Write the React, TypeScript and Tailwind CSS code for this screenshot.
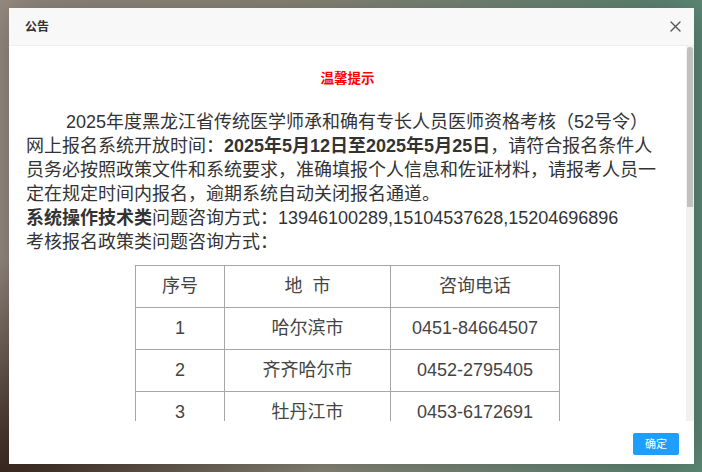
import React from 'react';

const rows = [
  { no: '1', city: '哈尔滨市', phone: '0451-84664507' },
  { no: '2', city: '齐齐哈尔市', phone: '0452-2795405' },
  { no: '3', city: '牡丹江市', phone: '0453-6172691' },
];

const font = { fontFamily: '"Liberation Sans", "Noto Sans CJK SC", sans-serif' };

const CloseIcon: React.FC = () => (
  <svg width="11" height="11" viewBox="0 0 11 11" className="block">
    <path d="M1 1 L10 10 M10 1 L1 10" stroke="#555" strokeWidth="1.4" strokeLinecap="round" />
  </svg>
);

const App: React.FC = () => {
  return (
    <div
      className="w-[702px] h-[472px] overflow-hidden pt-[8px] pl-[9px] bg-[radial-gradient(ellipse_at_bottom_left,#3a281e_0%,rgba(58,40,30,0)_32%),linear-gradient(to_right,#988c82,#8c8a7b_45%,#5d8a78)]"
      style={font}
    >
      <div className="w-[685px] h-[456px] bg-white flex flex-col shadow-[1px_1px_40px_rgba(0,0,0,0.3)]">
        {/* header */}
        <div className="h-[38px] shrink-0 bg-[#f8f8f8] border-b border-[#eeeeee] flex items-center justify-between pl-[16px] pr-[13px]">
          <span className="text-[12px] font-bold text-[#333]">公告</span>
          <CloseIcon />
        </div>

        {/* body */}
        <div className="h-[375px] shrink-0 flex overflow-hidden">
          <div className="flex-1 overflow-hidden px-[17px] pt-[23px] text-[#333]">
            <div className="text-center text-[13.5px] leading-[20px] font-bold text-[#ff0000]">温馨提示</div>
            <div className="mt-[21px] text-[18px] leading-[24px] whitespace-nowrap">
              <div className="pl-[40px]">2025年度黑龙江省传统医学师承和确有专长人员医师资格考核（52号令）</div>
              <div>
                网上报名系统开放时间：<b>2025年5月12日至2025年5月25日</b>，请符合报名条件人
              </div>
              <div>员务必按照政策文件和系统要求，准确填报个人信息和佐证材料，请报考人员一</div>
              <div>定在规定时间内报名，逾期系统自动关闭报名通道。</div>
              <div>
                <b>系统操作技术类</b>问题咨询方式：13946100289,15104537628,15204696896
              </div>
              <div>考核报名政策类问题咨询方式：</div>
            </div>
            <table className="mt-[11px] mx-auto border-collapse text-[18px] text-[#444]">
              <tbody>
                <tr className="h-[42px]">
                  <td className="w-[89px] border border-[#a6a6a6] text-center">序号</td>
                  <td className="w-[166px] border border-[#a6a6a6] text-center">地&nbsp;&nbsp;市</td>
                  <td className="w-[169px] border border-[#a6a6a6] text-center">咨询电话</td>
                </tr>
                {rows.map((r) => (
                  <tr key={r.no} className="h-[42px]">
                    <td className="border border-[#a6a6a6] text-center">{r.no}</td>
                    <td className="border border-[#a6a6a6] text-center">{r.city}</td>
                    <td className="border border-[#a6a6a6] text-center">{r.phone}</td>
                  </tr>
                ))}
              </tbody>
            </table>
          </div>
          {/* scrollbar */}
          <div className="w-[8px] shrink-0 bg-[#f1f1f1] pl-[1px] pr-[1px] pt-[1px]">
            <div className="h-[160px] rounded-t-[3px] bg-[#c1c1c1]" />
          </div>
        </div>

        {/* footer */}
        <div className="flex-1 flex justify-end items-start pt-[12px] pr-[15px]">
          <button className="w-[46px] h-[22px] bg-[#1e9fff] text-white text-[11px] rounded-[2px] flex items-center justify-center">
            确定
          </button>
        </div>
      </div>
    </div>
  );
};

export default App;
